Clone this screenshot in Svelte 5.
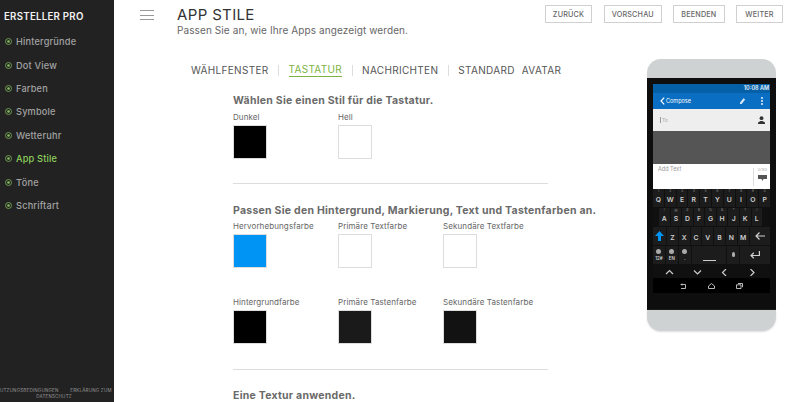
<script>
  const menu = ["Hintergründe", "Dot View", "Farben", "Symbole", "Wetteruhr", "App Stile", "Töne", "Schriftart"];
  const active = "App Stile";
  const buttons = ["Zurück", "Vorschau", "Beenden", "Weiter"];
  const tabs = ["Wählfenster", "Tastatur", "Nachrichten", "Standard Avatar"];

  const colorRows = [
    [
      { label: "Hervorhebungsfarbe", color: "#0094f5" },
      { label: "Primäre Textfarbe", color: "#fff" },
      { label: "Sekundäre Textfarbe", color: "#fff" }
    ],
    [
      { label: "Hintergrundfarbe", color: "#000" },
      { label: "Primäre Tastenfarbe", color: "#1a1a1a" },
      { label: "Sekundäre Tastenfarbe", color: "#121212" }
    ]
  ];

  const row1 = [["Q","1"],["W","2"],["E","3"],["R","4"],["T","5"],["Y","6"],["U","7"],["I","8"],["O","9"],["P","0"]];
  const row2 = [["A","!"],["S","@"],["D","#"],["F","$"],["G","%"],["H","&"],["J","*"],["K","?"],["L","/"]];
  const row3 = ["Z","X","C","V","B","N","M"];
</script>

<div class="page">
  <aside class="sidebar">
    <h2>Ersteller Pro</h2>
    <nav>
      {#each menu as item}
        <div class="item" class:active={item === active}>
          <svg width="7" height="7" viewBox="0 0 7 7">
            <circle cx="3.5" cy="3.500" r="3" fill="none" stroke="#6d9a4e" stroke-width="1" />
            <circle cx="3.5" cy="3.500" r="1.300" fill="#8cc063" />
          </svg>
          <span>{item}</span>
        </div>
      {/each}
    </nav>
    <div class="legal">
      <span class="line">Nutzungsbedingungen &nbsp;&nbsp;&nbsp;&nbsp;&nbsp;&nbsp;&nbsp;Erklärung zum</span>
      <span>Datenschutz</span>
    </div>
  </aside>

  <main>
    <header>
      <div class="burger"><i></i><i></i><i></i></div>
      <div class="titles">
        <h1>App Stile</h1>
        <p>Passen Sie an, wie Ihre Apps angezeigt werden.</p>
      </div>
      <div class="actions">
        {#each buttons as b}
          <button type="button">{b}</button>
        {/each}
      </div>
    </header>

    <div class="columns">
      <div class="left">
        <div class="tabs">
          {#each tabs as t, i}
            {#if i > 0}<span class="sep"></span>{/if}
            <span class="tab" class:on={t === "Tastatur"}>{t}</span>
          {/each}
        </div>

        <section class="panel">
          <h3>Wählen Sie einen Stil für die Tastatur.</h3>
          <div class="swatches">
            <div class="swatch"><label>Dunkel</label><div class="box" style="background:#000"></div></div>
            <div class="swatch"><label>Hell</label><div class="box" style="background:#fff"></div></div>
          </div>
          <hr />
          <h3 class="second">Passen Sie den Hintergrund, Markierung, Text und Tastenfarben an.</h3>
          {#each colorRows as row, r}
            <div class="swatches" class:upper={r === 0} class:lower={r === 1}>
              {#each row as c}
                <div class="swatch"><label>{c.label}</label><div class="box" style="background:{c.color}"></div></div>
              {/each}
            </div>
          {/each}
          <hr class="hr2" />
          <h3 class="third">Eine Textur anwenden.</h3>
        </section>
      </div>

      <div class="phone">
        <div class="bezel top"></div>
        <div class="body">
          <div class="screen">
            <div class="status">10:08 AM</div>
            <div class="appbar">
              <svg width="5" height="8" viewBox="0 0 5 8"><path d="M4.200 .6 1 4l3.200 3.400" fill="none" stroke="#fff" stroke-width="1.200" /></svg>
              <span>Compose</span>
              <svg class="clip" width="7" height="8" viewBox="0 0 7 8"><path d="M1 5.500 4.500 1.200 6.200 2.600 2.600 7H1z" fill="#dbe9f6" /></svg>
              <svg class="dots" width="2" height="8" viewBox="0 0 2 8"><circle cx="1" cy="1" r=".9" fill="#fff" /><circle cx="1" cy="4" r=".9" fill="#fff" /><circle cx="1" cy="7" r=".9" fill="#fff" /></svg>
            </div>
            <div class="to">
              <span class="field">To</span>
              <svg width="7" height="8" viewBox="0 0 7 8"><circle cx="3.500" cy="2.200" r="1.900" fill="#333" /><path d="M0 8V6.400L2.500 5h2L7 6.400V8z" fill="#333" /></svg>
            </div>
            <div class="grey"></div>
            <div class="compose">
              <span>Add Text</span>
              <div class="send"><small>0/160</small><svg width="9" height="6" viewBox="0 0 9 6"><path d="M0 0h9v4H5.500L4.500 6 3.500 4H0z" fill="#555" /></svg></div>
            </div>
            <div class="keyboard">
              <div class="kr">
                {#each row1 as k}<div class="key"><sup>{k[1]}</sup>{k[0]}</div>{/each}
              </div>
              <div class="kr r2">
                {#each row2 as k}<div class="key"><sup>{k[1]}</sup>{k[0]}</div>{/each}
              </div>
              <div class="kr">
                <div class="key fn">
                  <svg width="9" height="10" viewBox="0 0 9 10"><path d="M4.500 0 9 5H6v5H3V5H0z" fill="#0094f5" /></svg>
                </div>
                {#each row3 as k}<div class="key">{k}</div>{/each}
                <div class="key fn back">
                  <svg width="10" height="8" viewBox="0 0 10 8"><path d="M4.500.5 1 4l3.500 3.500M1 4h9" fill="none" stroke="#cfcfcf" stroke-width="1.200" /></svg>
                </div>
              </div>
              <div class="kr">
                <div class="key small"><i class="blob"></i>12#</div>
                <div class="key small"><i class="blob"></i>EN</div>
                <div class="key small"><i class="blob"></i>.</div>
                <div class="key space"><b></b></div>
                <div class="key small"><i class="blob mic"></i></div>
                <div class="key enter">
                  <svg width="10" height="8" viewBox="0 0 10 8"><path d="M9.400 0v4.500H1M3.800 1.800 1 4.500l2.800 2.700" fill="none" stroke="#cfcfcf" stroke-width="1.200" /></svg>
                </div>
              </div>
              <div class="arrows">
                {#each ["M1 5 4.500 1.500 8 5", "M1 1.500 4.500 5 8 1.500", "M5 0 1.500 3.500 5 7", "M1.500 0 5 3.500 1.500 7"] as d}
                  <svg width="9" height="7" viewBox="0 0 9 7"><path {d} fill="none" stroke="#ccc" stroke-width="1.200" /></svg>
                {/each}
              </div>
            </div>
            <div class="navbar">
              <svg width="7" height="6" viewBox="0 0 7 6"><path d="M2 .5 1 1.500 2 2.500M1 1.500h4.500v4H1" fill="none" stroke="#ccc" stroke-width=".9" /></svg>
              <svg width="7" height="6" viewBox="0 0 7 6"><path d="M.5 5.500V3L3.500.5 6.500 3v2.500z" fill="none" stroke="#ccc" stroke-width=".9" /></svg>
              <svg width="7" height="6" viewBox="0 0 7 6"><path d="M.5 1.800h4.500v3.700H.5zM2 .5h4.500v3.700" fill="none" stroke="#ccc" stroke-width=".9" /></svg>
            </div>
          </div>
        </div>
        <div class="bezel bottom"></div>
      </div>
    </div>
  </main>
</div>

<style>
  :global(body) {
    margin: 0;
    background: #fff;
  }

  .page {
    display: flex;
    width: 800px;
    height: 402px;
    overflow: hidden;
    font-family: "Inter", "Liberation Sans", sans-serif;
    color: #555;
  }

  .sidebar {
    width: 114px;
    flex: none;
    background: #222;
    display: flex;
    flex-direction: column;
  }

  .sidebar h2 {
    margin: 11px 0 0 4px;
    font-size: 9.700px;
    line-height: 12px;
    font-weight: 600;
    letter-spacing: 0.25px;
    color: #f2f2f2;
    text-transform: uppercase;
    white-space: nowrap;
  }

  nav {
    margin-top: 7px;
    display: flex;
    flex-direction: column;
  }

  .item {
    height: 23.400px;
    display: flex;
    align-items: center;
    gap: 4px;
    padding-left: 5px;
    font-size: 9.200px;
    font-weight: 500;
    letter-spacing: 0.2px;
    color: #a3a3a3;
  }

  .item.active {
    color: #8fd15c;
  }

  .legal {
    margin-top: auto;
    margin-bottom: 2px;
    display: flex;
    flex-direction: column;
    align-items: center;
    padding-right: 6px;
    font-size: 4.500px;
    line-height: 6px;
    letter-spacing: 0.2px;
    text-transform: uppercase;
    color: #949494;
    white-space: nowrap;
  }

  main {
    flex: 1;
    min-width: 0;
    display: flex;
    flex-direction: column;
  }

  header {
    display: flex;
    align-items: flex-start;
    flex: none;
    height: 50px;
    padding: 5px 17px 0 26px;
  }

  .burger {
    width: 14px;
    margin-top: 5px;
    display: flex;
    flex-direction: column;
    gap: 3.500px;
  }

  .burger i {
    display: block;
    height: 1px;
    background: #999;
  }

  .titles {
    margin-left: 23px;
  }

  h1 {
    margin: 1px 0 0;
    font-size: 15px;
    line-height: 18px;
    font-weight: 400;
    color: #333;
    letter-spacing: 0.35px;
    text-transform: uppercase;
  }

  .titles p {
    margin: 0;
    font-size: 10px;
    line-height: 12px;
    letter-spacing: 0.1px;
    color: #666;
    white-space: nowrap;
  }

  .actions {
    margin-left: auto;
    display: flex;
    gap: 11.500px;
  }

  .actions button {
    height: 18px;
    min-width: 47px;
    padding: 0 7px;
    background: #fff;
    border: 1px solid #d0d0d0;
    font: 500 7.200px "Inter", "Liberation Sans", sans-serif;
    letter-spacing: 0.2px;
    color: #666;
    text-transform: uppercase;
  }

  .columns {
    display: flex;
    flex: 1;
    min-height: 0;
  }

  .left {
    flex: 1;
    min-width: 0;
  }

  .tabs {
    display: flex;
    align-items: center;
    margin: 8px 0 0 77px;
    height: 14px;
    white-space: nowrap;
  }

  .tab {
    font-size: 10px;
    line-height: 13px;
    letter-spacing: 0.32px;
    word-spacing: 4px;
    font-weight: 400;
    color: #555;
    text-transform: uppercase;
  }

  .tab.on {
    color: #7cb342;
    border-bottom: 1px solid #7cb342;
  }

  .sep {
    width: 1px;
    height: 11px;
    margin: 0 9.500px;
    background: #ddd;
  }

  .panel {
    margin: 18px 0 0 119px;
    width: 315px;
  }

  h3 {
    margin: 0;
    font-size: 10.500px;
    line-height: 12px;
    font-weight: 700;
    letter-spacing: 0.25px;
    color: #6a6a6a;
    white-space: nowrap;
  }

  .swatches {
    display: flex;
    margin-top: 4px;
  }

  .swatches.upper {
    margin-top: 3px;
  }

  .swatches.lower {
    margin-top: 28px;
  }

  .swatch {
    width: 105px;
  }

  label {
    display: block;
    font-size: 8px;
    line-height: 12px;
    color: #666;
    letter-spacing: 0.1px;
    white-space: nowrap;
  }

  .box {
    width: 32px;
    height: 32px;
    margin-top: 2px;
    border: 1px solid #ddd;
  }

  hr {
    margin: 24px 0 0;
    border: 0;
    height: 1px;
    background: #ddd;
  }

  .second {
    margin-top: 21px;
  }

  .hr2 {
    margin-top: 25px;
  }

  .third {
    margin-top: 20px;
  }

  /* phone mock */
  .phone {
    flex: none;
    width: 129px;
    height: 272px;
    margin: 4px 24px 0 0;
    display: flex;
    flex-direction: column;
  }

  .bezel {
    background: #cfd2d3;
    flex: none;
  }

  .bezel.top {
    height: 19px;
    border-radius: 14px 14px 0 0;
  }

  .bezel.bottom {
    height: 21px;
    border-radius: 0 0 14px 14px;
    box-shadow: 0 1px 2px #ddd;
  }

  .body {
    flex: 1;
    background: #0e0e0e;
    padding: 6px 6px 0;
  }

  .screen {
    display: flex;
    flex-direction: column;
    font-size: 6px;
  }

  .status {
    height: 9px;
    line-height: 9px;
    background: #0560a8;
    color: #e8f0f8;
    text-align: right;
    padding-right: 1px;
    font-size: 5.500px;
    font-weight: 600;
  }

  .appbar {
    height: 16px;
    background: #0a6fc2;
    color: #fff;
    display: flex;
    align-items: center;
    padding: 0 7px;
    font-size: 5.500px;
    gap: 1px;
  }

  .appbar .clip {
    margin-left: auto;
    margin-right: 14px;
  }

  .to {
    height: 22px;
    background: #eee;
    display: flex;
    align-items: center;
    justify-content: space-between;
    padding: 0 5px 0 7px;
    color: #aaa;
    font-size: 5px;
  }

  .field {
    border-left: 1px solid #999;
    padding-left: 1px;
  }

  .grey {
    height: 33px;
    background: #555;
  }

  .compose {
    height: 25px;
    background: #fff;
    display: flex;
    justify-content: space-between;
    padding: 2px 3px 0 5px;
    box-sizing: border-box;
    color: #999;
    font-size: 5.500px;
  }

  .send {
    display: flex;
    flex-direction: column;
    align-items: flex-end;
    gap: 3px;
    border-left: 1px solid #ddd;
    padding-left: 4px;
    height: 18px;
    margin-top: 2px;
  }

  .send small {
    font-size: 3.500px;
    color: #aaa;
  }

  .keyboard {
    background: #101010;
    display: flex;
    flex-direction: column;
    gap: 1.500px;
    height: 89px;
    overflow: hidden;
  }

  .kr {
    display: flex;
    gap: 1px;
    height: 17.500px;
    flex: none;
  }

  .r2 {
    padding: 0 8px 0 6px;
  }

  .key {
    flex: 1;
    position: relative;
    background: #1c1c1c;
    color: #cfcfcf;
    font-size: 6.800px;
    font-weight: 600;
    display: flex;
    align-items: center;
    justify-content: center;
    padding-top: 4px;
    box-sizing: border-box;
  }

  .key sup {
    position: absolute;
    top: 0;
    left: 0;
    right: 0;
    text-align: center;
    font-size: 3.500px;
    line-height: 4px;
    font-weight: 400;
    color: #888;
  }

  .key.fn {
    flex: 1.200;
    padding-top: 0;
  }

  .key.back {
    flex: 1.900;
  }

  .key.small {
    flex-direction: column;
    font-size: 4.500px;
    gap: 2px;
    padding-top: 0;
  }

  .blob {
    width: 5px;
    height: 5px;
    border-radius: 50%;
    background: #aaa;
  }

  .blob.mic {
    width: 3px;
    border-radius: 2px;
  }

  .key.space {
    flex: 2.900;
    align-items: flex-end;
    padding-bottom: 3px;
  }

  .key.space b {
    display: block;
    width: 13px;
    height: 1px;
    background: #ccc;
  }

  .key.enter {
    flex: 2.500;
    padding-top: 0;
  }

  .arrows {
    height: 14px;
    flex: none;
    display: flex;
    justify-content: space-around;
    align-items: center;
    padding: 0 3px;
  }

  .navbar {
    height: 15px;
    background: #000;
    display: flex;
    justify-content: space-around;
    align-items: center;
    padding: 0 17px;
  }
</style>
